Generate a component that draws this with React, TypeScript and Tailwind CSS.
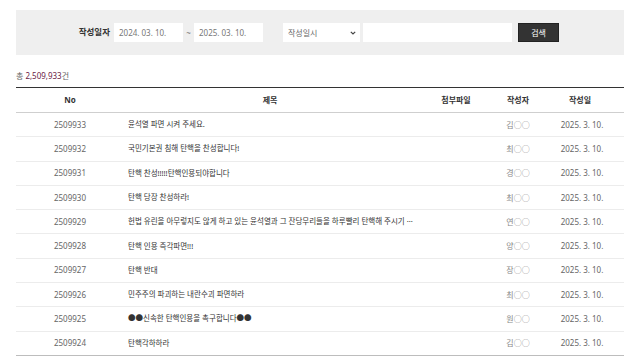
// 게시판 목록 - 검색 패널 + 테이블
const rows = [
  { no: '2509933', title: '윤석열 파면 시켜 주세요.', author: '김○○' },
  { no: '2509932', title: '국민기본권 침해 탄핵을 찬성합니다!', author: '최○○' },
  { no: '2509931', title: '탄핵 찬성!!!!!탄핵인용되야합니다', author: '경○○' },
  { no: '2509930', title: '탄핵 당장 찬성하라!', author: '최○○' },
  { no: '2509929', title: '헌법 유린을 아무렇지도 않게 하고 있는 윤석열과 그 잔당무리들을 하루빨리 탄핵해 주시기 ···', author: '연○○' },
  { no: '2509928', title: '탄핵 인용 즉각파면!!!', author: '양○○' },
  { no: '2509927', title: '탄핵 반대', author: '장○○' },
  { no: '2509926', title: '민주주의 파괴하는 내란수괴 파면하라', author: '최○○' },
  { no: '2509925', title: '●●신속한 탄핵인용을 촉구합니다●●', author: '원○○' },
  { no: '2509924', title: '탄핵각하하라', author: '김○○' },
];

const cols = 'grid grid-cols-[108px_292px_80px_44px_80px] items-center';

export default function App() {
  return (
    <div className="w-[640px] h-[361px] bg-white px-[16px] pt-[10px] text-[8px] text-[#333] overflow-hidden font-['Noto_Sans','Noto_Sans_CJK_KR',sans-serif]">
      {/* 검색 패널 */}
      <div className="h-[45px] bg-[#efefef] flex items-center pl-[44px]">
        <span className="w-[54px] text-right pr-[4px] font-bold text-[8.5px] text-[#333]">작성일자</span>
        <div className="w-[69px] h-[19px] bg-white flex items-center pl-[5px] text-[#777]">2024. 03. 10.</div>
        <span className="w-[11px] text-center text-[#777]">~</span>
        <div className="w-[69px] h-[19px] bg-white flex items-center pl-[5px] text-[#777]">2025. 03. 10.</div>
        <div className="ml-[20px] w-[77px] h-[19px] bg-white flex items-center justify-between pl-[5px] pr-[4px] text-[#666]">
          <span>작성일시</span>
          <svg width="6" height="4" viewBox="0 0 6 4" fill="none" stroke="#444" strokeWidth="1.2">
            <path d="M0.8 0.8L3 3L5.2 0.8" />
          </svg>
        </div>
        <div className="ml-[3px] w-[149px] h-[19px] bg-white" />
        <button className="ml-[6px] w-[41px] h-[19px] bg-[#333] text-white text-[8px] border border-[#222]">검색</button>
      </div>

      {/* 총 건수 */}
      <div className="mt-[13px] h-[15px] flex items-center text-[8px]">
        <span className="text-[#666]">총</span>
        <span className="ml-[2px] text-[#6b2347]">2,509,933</span>
        <span className="text-[#666]">건</span>
      </div>

      {/* 테이블 */}
      <div className="mt-[4px] border-t-[1.5px] border-[#333]">
        <div className={`${cols} h-[25px] border-b border-[#cfcfcf] font-bold text-[#333] text-center`}>
          <span>No</span>
          <span>제목</span>
          <span>첨부파일</span>
          <span>작성자</span>
          <span>작성일</span>
        </div>
        {rows.map((r, i) => (
          <div
            key={r.no}
            className={`${cols} h-[24.3px] border-b ${i === rows.length - 1 ? 'border-[#bdbdbd]' : 'border-[#ececec]'}`}
          >
            <span className="text-center text-[#666]">{r.no}</span>
            <span className="pl-[4px] text-[7.5px] text-[#333] whitespace-nowrap">{r.title}</span>
            <span />
            <span className="text-center text-[#888]">{r.author}</span>
            <span className="text-center pl-[4px] text-[#666]">2025. 3. 10.</span>
          </div>
        ))}
      </div>
    </div>
  );
}
